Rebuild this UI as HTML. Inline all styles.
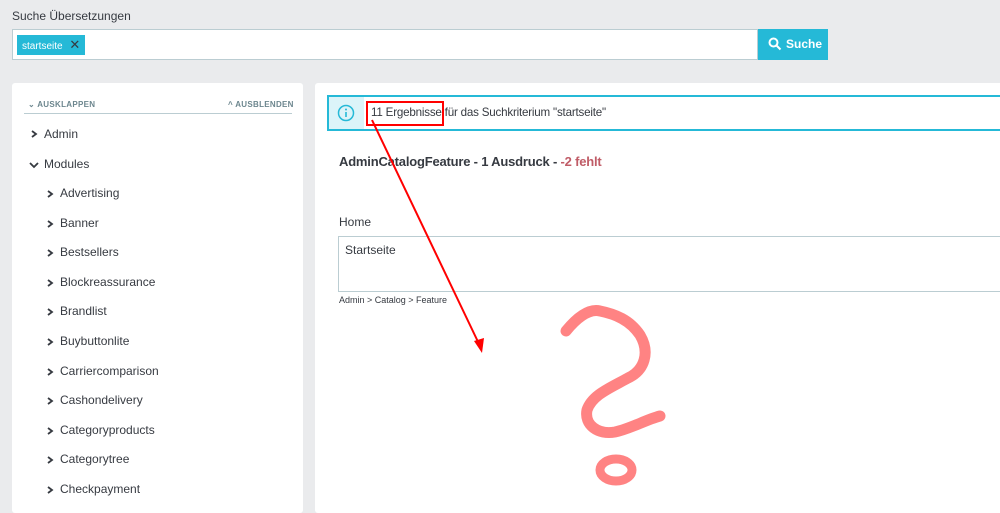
<!DOCTYPE html>
<html><head><meta charset="utf-8"><style>
*{box-sizing:border-box;margin:0;padding:0}
body{width:1000px;height:504px;overflow:hidden;background:#eaebed;font-family:"Liberation Sans",sans-serif;color:#363a41;position:relative}
.abs{position:absolute}
.lbl{left:12px;top:9px;font-size:12px;color:#363a41}
.input{left:12px;top:29px;width:746px;height:31px;background:#fff;border:1px solid #bbcdd2}
.tag{left:17px;top:35px;height:20px;width:68px;background:#25b9d7;color:#fff;font-size:10px;line-height:20px;padding-left:5px}
.btn{left:758px;top:29px;width:70px;height:31px;background:#25b9d7;color:#fff;font-size:12px;font-weight:bold;line-height:31px;padding-left:28px}
.left{left:12px;top:83px;width:291px;height:430px;background:#fff;border-radius:3px}
.right{left:315px;top:83px;width:700px;height:430px;background:#fff;border-radius:3px}
.hdr{font-size:8px;font-weight:bold;color:#6c868e;letter-spacing:.3px;top:100px}
.item{font-size:12px;color:#363a41}
</style></head><body>
<div class="abs lbl">Suche Übersetzungen</div>
<div class="abs input"></div>
<div class="abs tag">startseite <span style="color:#363a41;font-size:13px;margin-left:4px">✕</span></div>
<div class="abs btn">Suche</div>
<svg class="abs" style="left:768px;top:37px" width="14" height="14"><circle cx="5.5" cy="5.5" r="4" fill="none" stroke="#fff" stroke-width="2"/><path d="M8.5 8.5L12.5 12.5" stroke="#fff" stroke-width="2"/></svg>

<div class="abs left"></div>
<div class="abs hdr" style="left:28px">⌄ AUSKLAPPEN</div>
<div class="abs hdr" style="left:228px">^ AUSBLENDEN</div>
<div class="abs" style="left:24px;top:113px;width:268px;height:1px;background:#bbcdd2"></div>
<svg class="abs" style="left:30px;top:130px" width="8" height="8"><path d="M2 1L6 4L2 7" fill="none" stroke="#363a41" stroke-width="1.8"/></svg>
<div class="abs item" style="left:44px;top:127px">Admin</div>
<svg class="abs" style="left:29px;top:161px" width="10" height="8"><path d="M1 2L5 6L9 2" fill="none" stroke="#363a41" stroke-width="1.8"/></svg>
<div class="abs item" style="left:44px;top:157px">Modules</div>
<div id="sub"></div>

<div class="abs right"></div>
<div class="abs" style="left:327px;top:95px;width:700px;height:36px;border:2px solid #25b9d7;background:#fff"></div>
<div class="abs" style="left:329px;top:97px;width:35px;height:32px;background:#dcf4f9"></div>
<svg class="abs" style="left:337px;top:104px" width="18" height="18"><circle cx="9" cy="9" r="7.5" fill="none" stroke="#25b9d7" stroke-width="1.5"/><rect x="8.2" y="8" width="1.6" height="5" fill="#25b9d7"/><circle cx="9" cy="5.5" r="1" fill="#25b9d7"/></svg>
<div class="abs" style="left:371px;top:106px;font-size:11.6px;letter-spacing:-0.2px">11 Ergebnisse für das Suchkriterium "startseite"</div>
<div class="abs" style="left:339px;top:154px;font-size:13px;font-weight:bold;letter-spacing:-0.2px">AdminCatalogFeature - 1 Ausdruck - <span style="color:#c05c67">-2 fehlt</span></div>
<div class="abs" style="left:339px;top:215px;font-size:12px">Home</div>
<div class="abs" style="left:338px;top:236px;width:680px;height:56px;border:1px solid #bbcdd2"></div>
<div class="abs" style="left:345px;top:243px;font-size:12px">Startseite</div>
<div class="abs" style="left:339px;top:295px;font-size:9px">Admin &gt; Catalog &gt; Feature</div>

<svg class="abs" style="left:0;top:0" width="1000" height="504">
<rect x="367" y="102" width="76" height="23" fill="none" stroke="#f00" stroke-width="2"/>
<path d="M372 120L480 346" stroke="#f00" stroke-width="2"/>
<path d="M482 353L474 341L484 338Z" fill="#f00"/>
<path d="M566 331C575 320 588 308 600 311C615 314 630 320 640 335C650 352 645 370 628 378C610 388 592 395 587 410C584 425 598 435 615 432C630 429 645 420 660 416" fill="none" stroke="#ff8383" stroke-width="11" stroke-linecap="round"/>
<ellipse cx="616" cy="470" rx="16" ry="11" fill="none" stroke="#ff8383" stroke-width="9"/>
</svg>
<script>
var n=["Advertising","Banner","Bestsellers","Blockreassurance","Brandlist","Buybuttonlite","Carriercomparison","Cashondelivery","Categoryproducts","Categorytree","Checkpayment"],h="";
n.forEach(function(t,i){var y=186+i*29.6;h+='<svg class="abs" style="left:46px;top:'+(y+4)+'px" width="8" height="8"><path d="M2 1L6 4L2 7" fill="none" stroke="#363a41" stroke-width="1.8"/></svg><div class="abs item" style="left:60px;top:'+y+'px">'+t+'</div>';});
document.getElementById("sub").innerHTML=h;
</script>
</body></html>
